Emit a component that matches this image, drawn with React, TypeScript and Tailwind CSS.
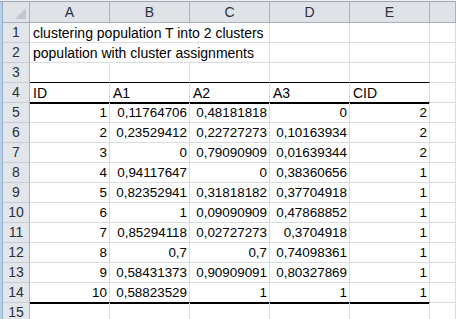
import React from 'react';

type Cell = string | number;

const ROWS: Cell[][] = [
  ['clustering population T into 2 clusters', '', '', '', ''],
  ['population with cluster assignments', '', '', '', ''],
  ['', '', '', '', ''],
  ['ID', 'A1', 'A2', 'A3', 'CID'],
  [1, '0,11764706', '0,48181818', 0, 2],
  [2, '0,23529412', '0,22727273', '0,10163934', 2],
  [3, 0, '0,79090909', '0,01639344', 2],
  [4, '0,94117647', 0, '0,38360656', 1],
  [5, '0,82352941', '0,31818182', '0,37704918', 1],
  [6, 1, '0,09090909', '0,47868852', 1],
  [7, '0,85294118', '0,02727273', '0,3704918', 1],
  [8, '0,7', '0,7', '0,74098361', 1],
  [9, '0,58431373', '0,90909091', '0,80327869', 1],
  [10, '0,58823529', 1, 1, 1],
  ['', '', '', '', ''],
];

const LETTERS = ['A', 'B', 'C', 'D', 'E'];

const isNum = (v: Cell) => typeof v === 'number' || /^[0-9,]+$/.test(v);

function DataCell({ value, row, col }: { value: Cell; row: number; col: number }) {
  const num = value !== '' && isNum(value);
  // black rules under row 3, row 4 (thick) and row 14 (thick)
  const blackBottom = row === 3 || row === 4 || row === 14;
  const thickTop = row === 5 || row === 15;
  // title text in rows 1-2 spills over columns B and C
  const spill = row <= 2 && col <= 1;
  return (
    <div
      className={`relative w-[80px] h-[20px] shrink-0 border-r border-b flex items-center ${
        spill ? 'border-r-transparent' : 'border-r-[#dadcdd]'
      } ${blackBottom ? 'border-b-black' : 'border-b-[#dadcdd]'} ${
        thickTop ? 'shadow-[inset_0_1px_0_#000]' : ''
      } ${num ? 'justify-end pr-[2px] text-[13.4px]' : 'justify-start pl-[3px] text-[14px]'}`}
    >
      <span className="whitespace-nowrap text-black leading-none">{value}</span>
    </div>
  );
}

export default function App() {
  return (
    <div
      className="w-[456px] h-[319px] overflow-hidden bg-white relative"
      style={{ fontFamily: '"Liberation Sans", Arial, sans-serif' }}
    >
      {/* top edge */}
      <div className="h-[2px] bg-[#eef0f3] border-b border-[#9ea7b2]" />
      {/* column headers */}
      <div className="flex h-[21px]">
        <div className="w-[3px] shrink-0 bg-[#b9d0ec] border-r border-[#9aaec6]" />
        <div className="w-[27px] shrink-0 bg-[#dfe3e8] border-r border-b border-[#a9b1bb] relative">
          <svg className="absolute right-[3px] bottom-[3px]" width="11" height="11" viewBox="0 0 11 11">
            <polygon points="11,0 11,11 0,11" fill="#c3c8ce" />
          </svg>
        </div>
        {LETTERS.map((l) => (
          <div
            key={l}
            className="w-[80px] shrink-0 bg-[#dfe3e8] border-r border-b border-[#a9b1bb] flex items-center justify-center text-[14px] text-[#27313d]"
          >
            {l}
          </div>
        ))}
        <div className="flex-1 bg-[#dfe3e8] border-r border-b border-[#a9b1bb]" />
      </div>
      {ROWS.map((cells, i) => {
        const row = i + 1;
        return (
          <div key={row} className="flex h-[20px]">
            <div className="w-[3px] shrink-0 bg-[#b9d0ec] border-r border-[#9aaec6]" />
            <div className="w-[27px] shrink-0 bg-[#e2e6eb] border-r border-b border-r-[#a9b1bb] border-b-[#c6ccd3] flex items-center justify-center text-[14px] text-[#27313d]">
              {row}
            </div>
            {cells.map((v, c) => (
              <DataCell key={c} value={v} row={row} col={c} />
            ))}
            <div className="flex-1 border-r border-b border-[#dadcdd]" />
          </div>
        );
      })}
    </div>
  );
}
